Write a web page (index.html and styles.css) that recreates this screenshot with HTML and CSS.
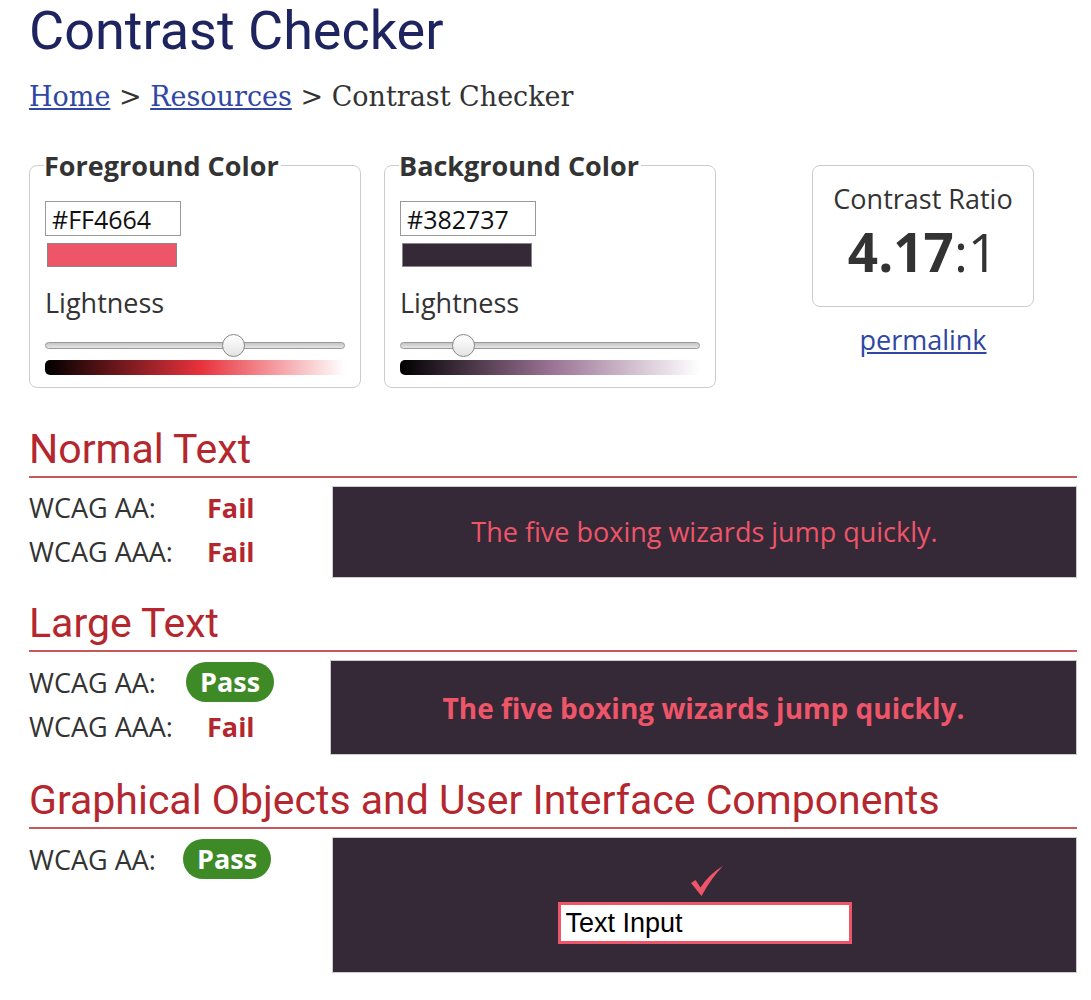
FILE: index.html
```html
<!DOCTYPE html>
<html>
<head>
<meta charset="utf-8">
<link rel="stylesheet" href="styles.css">
</head>
<body>
<main class="page">
  <h1 class="title">Contrast Checker</h1>
  <nav class="crumbs"><a href="#">Home</a> &gt; <a href="#">Resources</a> &gt; Contrast Checker</nav>

  <section class="pickers">
    <fieldset class="picker">
      <legend>Foreground Color</legend>
      <input class="hex" type="text" value="#FF4664">
      <div class="swatch fg"></div>
      <label class="light-label">Lightness</label>
      <div class="slider"><div class="track"></div><div class="thumb thumb-fg"></div></div>
      <div class="grad grad-fg"></div>
    </fieldset>
    <fieldset class="picker">
      <legend>Background Color</legend>
      <input class="hex" type="text" value="#382737">
      <div class="swatch bg"></div>
      <label class="light-label">Lightness</label>
      <div class="slider"><div class="track"></div><div class="thumb thumb-bg"></div></div>
      <div class="grad grad-bg"></div>
    </fieldset>
    <div class="ratio-col">
      <div class="ratio-box">
        <div class="ratio-label">Contrast Ratio</div>
        <div class="ratio-value"><b>4.17</b>:1</div>
      </div>
      <a class="permalink" href="#">permalink</a>
    </div>
  </section>

  <h2 class="sect sect-first">Normal Text</h2>
  <div class="result">
    <div class="levels">
      <div class="lvl"><span class="lname">WCAG AA:</span><span class="fail">Fail</span></div>
      <div class="lvl"><span class="lname">WCAG AAA:</span><span class="fail">Fail</span></div>
    </div>
    <div class="demo demo-normal">The five boxing wizards jump quickly.</div>
  </div>

  <h2 class="sect">Large Text</h2>
  <div class="result">
    <div class="levels levels-large">
      <div class="lvl"><span class="lname short">WCAG AA:</span><span class="pass">Pass</span></div>
      <div class="lvl"><span class="lname">WCAG AAA:</span><span class="fail">Fail</span></div>
    </div>
    <div class="demo demo-large">The five boxing wizards jump quickly.</div>
  </div>

  <h2 class="sect">Graphical Objects and User Interface Components</h2>
  <div class="result">
    <div class="levels">
      <div class="lvl"><span class="lname short2">WCAG AA:</span><span class="pass">Pass</span></div>
    </div>
    <div class="demo demo-ui">
      <svg class="check" width="32" height="30" viewBox="0 0 32 30" aria-hidden="true">
        <path d="M0 17 L4.5 14 L9.5 21.5 Q18 8 32 0 Q21 11 10.5 30 Z" fill="#ef5568"/>
      </svg>
      <div class="fake-input">Text Input</div>
    </div>
  </div>
</main>
</body>
</html>
```
FILE: styles.css
```css
* { box-sizing: border-box; }
body {
  margin: 0;
  background: #fff;
  font-family: "Open Sans", sans-serif;
  color: #333;
}
.page {
  padding: 0 14px 0 29px;
}
.title {
  font-family: Roboto, sans-serif;
  font-weight: 400;
  font-size: 54px;
  line-height: 1;
  color: #1e2460;
  margin: 4px 0 0;
}
.crumbs {
  font-family: "DejaVu Serif", serif;
  font-size: 27px;
  color: #333;
  margin-top: 23px;
  line-height: 1.2;
}
.crumbs a { color: #2f47a3; }

.pickers {
  display: flex;
  align-items: flex-start;
  margin-top: 39px;
}
.picker {
  width: 332px;
  margin: 0 23px 0 0;
  border: 1px solid #ccc;
  border-radius: 8px;
  padding: 0 15px 12px 15px;
  display: flex;
  flex-direction: column;
  align-items: flex-start;
}
.picker legend {
  font-weight: 700;
  font-size: 27px;
  color: #333;
  padding: 0 2px 0 0;
  margin-left: -1px;
  line-height: 1;
}
.hex {
  font-family: "Open Sans", sans-serif;
  font-size: 25px;
  width: 136px;
  height: 35px;
  margin-top: 22px;
  border: 1px solid #999;
  padding: 0 6px;
  color: #111;
}
.swatch {
  width: 130px;
  height: 24px;
  margin: 7px 0 0 2px;
  border: 1px solid #888;
}
.fg { background: #ef5568; }
.bg { background: #352837; }
.light-label {
  font-size: 27px;
  margin-top: 20px;
  line-height: 1.2;
}
.slider {
  position: relative;
  width: 300px;
  height: 24px;
  margin-top: 13px;
}
.track {
  position: absolute;
  left: 0; right: 0; top: 9px;
  height: 7px;
  border-radius: 4px;
  background: linear-gradient(#c4c4c4, #e6e6e6);
  border: 1px solid #999;
}
.thumb {
  position: absolute;
  top: 1px;
  width: 23px; height: 23px;
  border-radius: 50%;
  background: linear-gradient(#fff, #e4e4e4);
  border: 1px solid #888;
}
.thumb-fg { left: 177px; }
.thumb-bg { left: 52px; }
.grad {
  width: 300px;
  height: 15px;
  border-radius: 5px;
  margin-top: 3px;
}
.grad-fg { background: linear-gradient(to right, #000, #e8323c 52%, #fff); }
.grad-bg { background: linear-gradient(to right, #000, #9a7193 50%, #fff); }

.ratio-col {
  display: flex;
  flex-direction: column;
  align-items: center;
  margin-left: 73px;
  margin-top: 13px;
}
.ratio-box {
  width: 222px;
  height: 142px;
  border: 1px solid #ccc;
  border-radius: 8px;
  text-align: center;
  padding-top: 15px;
}
.ratio-label { font-size: 27px; line-height: 1.3; }
.ratio-value { font-size: 53px; line-height: 1.3; margin-top: 2px; }
.ratio-value b { font-weight: 700; }
.permalink {
  font-size: 27px;
  color: #2f47a3;
  margin-top: 14px;
}

.sect {
  font-family: Roboto, sans-serif;
  font-weight: 400;
  font-size: 41px;
  color: #b4272e;
  margin: 21px 0 0;
  border-bottom: 2px solid #c4585c;
  line-height: 1.2;
  padding-bottom: 2px;
}
.sect.sect-first { margin-top: 37px; }
.result {
  display: flex;
  margin-top: 8px;
}
.levels {
  width: 303px;
  flex-shrink: 0;
  margin-top: 0;
}
.levels-large { width: 301px; }
.lvl {
  display: flex;
  align-items: center;
  font-size: 27px;
  height: 44px;
}
.lname { width: 178px; }
.lname.short { width: 157px; }
.lname.short2 { width: 154px; }
.fail { color: #b4272e; font-weight: 700; }
.pass {
  background: #3d8a27;
  color: #fff;
  font-weight: 700;
  border-radius: 20px;
  padding: 0 14px;
  height: 40px;
  line-height: 40px;
}
.demo {
  flex: 1;
  background: #352837;
  border: 1px solid #ccc;
  color: #ef5568;
  display: flex;
  align-items: center;
  justify-content: center;
}
.demo-normal { height: 92px; font-size: 27px; }
.demo-large { height: 95px; font-size: 28px; font-weight: 700; }
.demo-ui {
  height: 136px;
  flex-direction: column;
}
.check {
  display: block;
  margin-left: 4px;
}
.fake-input {
  width: 294px;
  height: 42px;
  background: #fff;
  border: 3px solid #ef5568;
  color: #000;
  font-family: "Liberation Sans", sans-serif;
  font-size: 27px;
  padding-left: 5px;
  line-height: 36px;
  margin-top: 6px;
}
```
